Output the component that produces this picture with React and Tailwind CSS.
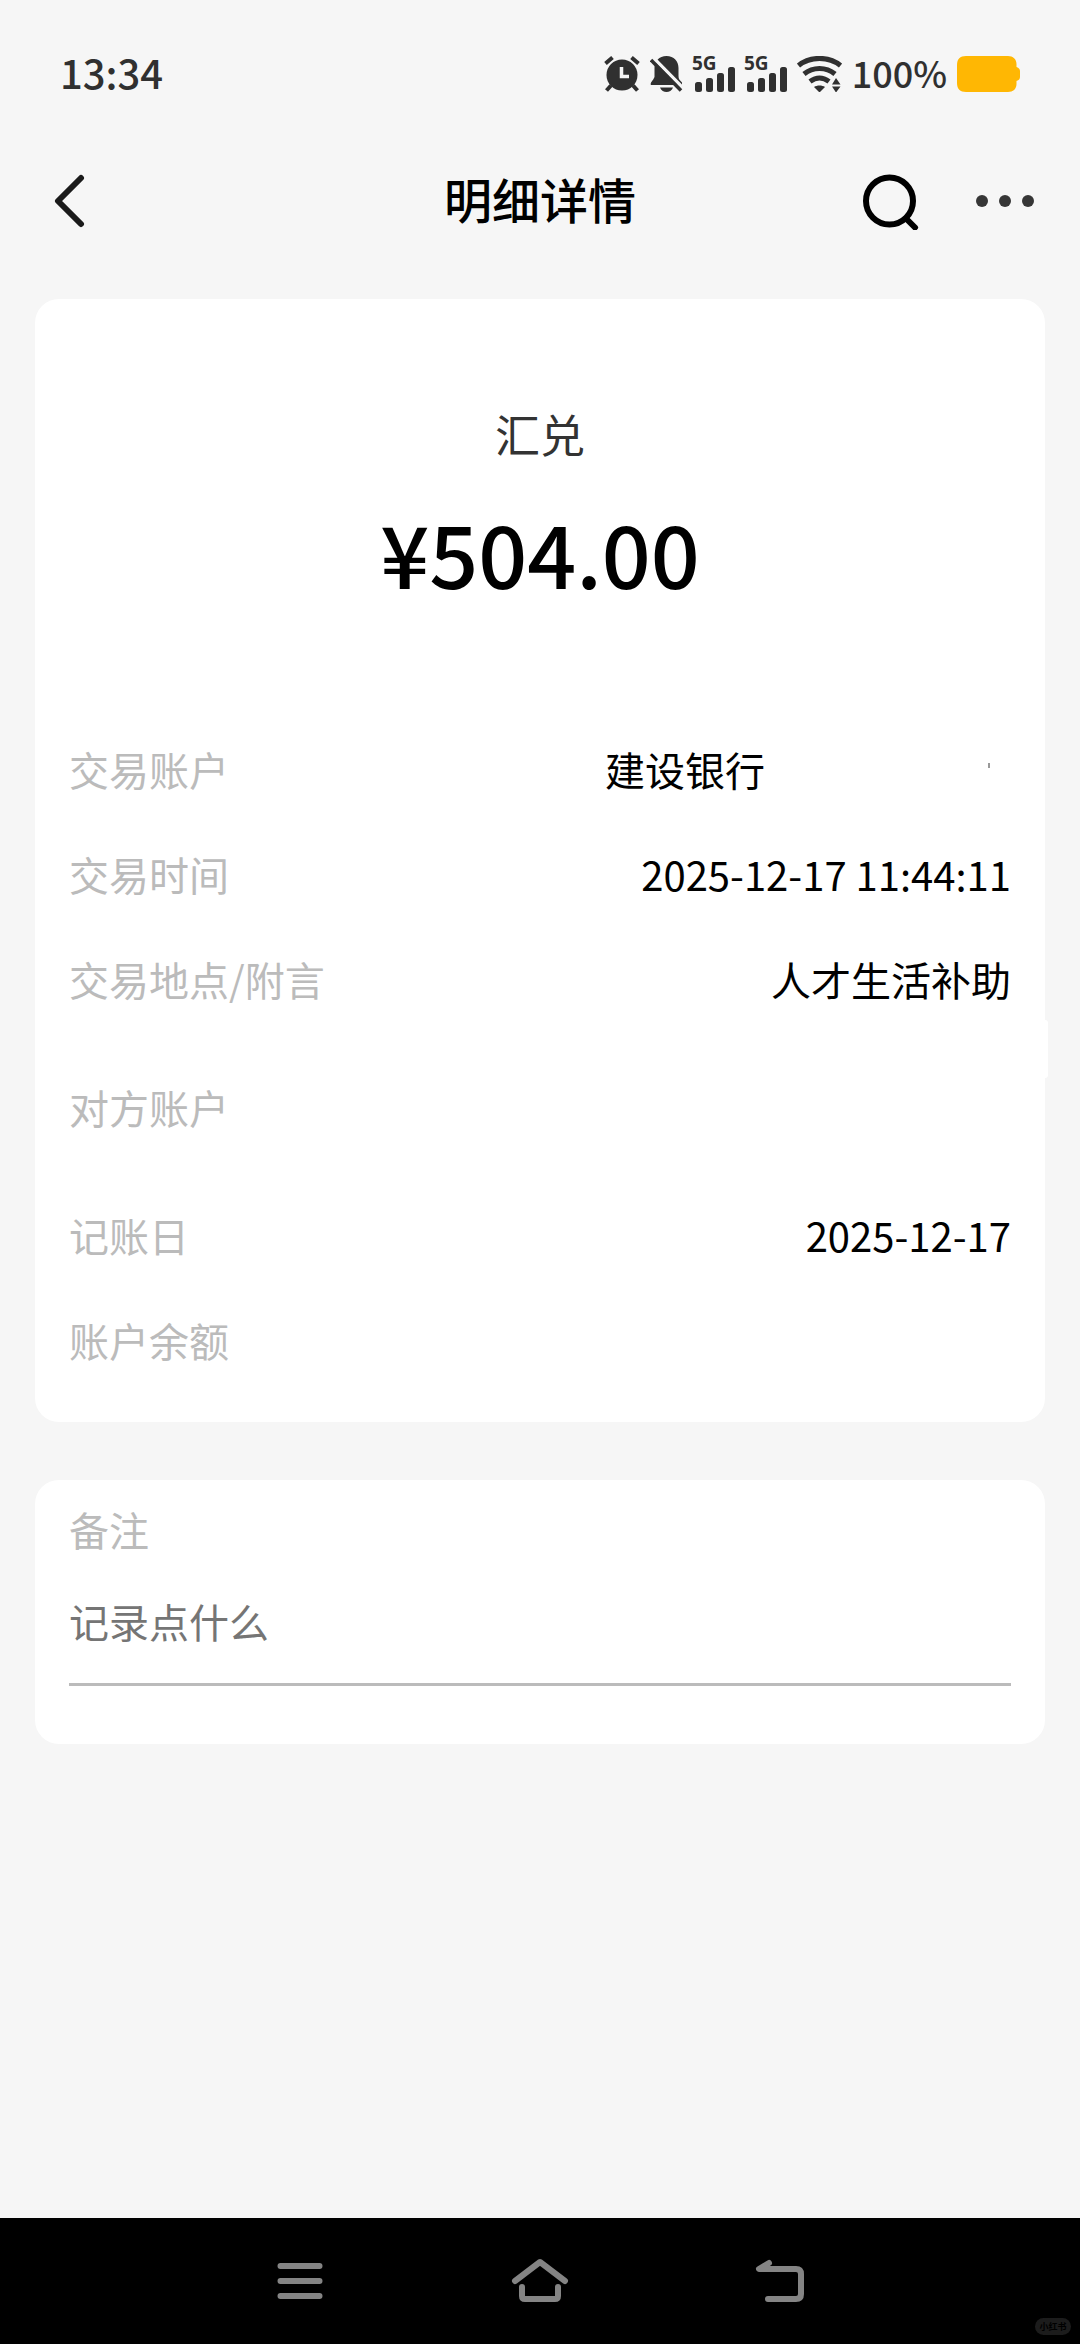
import React, { useState } from "react";

const details = [
  { label: "交易账户", value: "建设银行", masked: true },
  { label: "交易时间", value: "2025-12-17 11:44:11" },
  { label: "交易地点/附言", value: "人才生活补助" },
  { label: "对方账户", value: "", tall: true },
  { label: "记账日", value: "2025-12-17" },
  { label: "账户余额", value: "" }
];

const AlarmIcon = () => (
  <svg width="36" height="36" viewBox="0 0 36 36" fill="none" aria-hidden="true">
    <circle cx="18" cy="19" r="15.500" fill="#303030" />
    <path d="M1.500 7.500 8.500 1.500M34.500 7.500l-7-6" stroke="#303030" strokeWidth="4" />
    <path d="M7 29.500 2.500 34.500M29 29.500l4.500 5" stroke="#303030" strokeWidth="4" />
    <path d="M17.500 11v9.500H25" stroke="#f5f5f5" strokeWidth="3.500" />
  </svg>
);

const BellOffIcon = () => (
  <svg width="33" height="36" viewBox="0 0 33 36" fill="none" aria-hidden="true">
    <path d="M16.500 0C24 0 28.500 5 28.500 12v8c0 3 1 4 3.500 6.500V29H1c-1.500-2 2-4 3.500-8V12C4.500 5 9 0 16.500 0Z" fill="#303030" />
    <path d="M10 31.500h13c-1 3-4 4.500-6.500 4.500S11 34.500 10 31.500Z" fill="#303030" />
    <path d="M3 1.500 35 34" stroke="#f5f5f5" strokeWidth="3.500" />
    <path d="M1 4 31 34.500" stroke="#303030" strokeWidth="3.500" />
  </svg>
);

const SignalIcon = () => (
  <svg width="42" height="36" viewBox="0 0 42 36" className="overflow-visible" aria-hidden="true">
    <text x="-1" y="14" fontSize="19" fontWeight="700" fill="#303030" fontFamily="Open Sans, sans-serif">5G</text>
    <rect x="2" y="26" width="7" height="10" rx="2.500" fill="#303030" />
    <rect x="13" y="22" width="7" height="14" rx="2.500" fill="#303030" />
    <rect x="24" y="17" width="7" height="19" rx="2.500" fill="#303030" />
    <rect x="35" y="11" width="7" height="25" rx="2.500" fill="#303030" />
  </svg>
);

const WifiIcon = () => (
  <svg width="45" height="36" viewBox="0 0 45 36" fill="none" aria-hidden="true">
    <g stroke="#303030" strokeWidth="5">
      <path d="M1.500 9.500C13 0 32 0 43.500 9.500" />
      <path d="M7 18c9-7.500 22-7.500 31 0" />
      <path d="M13 25.500c6-4.500 13-4.500 19 0" />
    </g>
    <path d="M17 31c3-2 8-2 11 0l-5.500 5.500Z" fill="#303030" />
    <path d="M35 28.500 39 22l4.500 6.500ZM35 30.500l4 6 4.500-6Z" fill="#303030" />
  </svg>
);

const BatteryIcon = () => (
  <svg width="63" height="36" viewBox="0 0 63 36" aria-hidden="true">
    <path d="M9 0h42c5 0 8.500 3 8.500 8v3c2.500 1 3.500 2 3.500 4v6c0 2-1 3-3.500 4v3c0 5-3.500 8-8.500 8H9c-6 0-9-3-9-9V9c0-6 3-9 9-9Z" fill="#ffb703" />
  </svg>
);

const StatusBar = () => (
  <div className="flex h-[148px] items-center justify-between px-[60px] font-medium text-[#303030]">
    <span className="pb-[4px] text-[40px] leading-[48px]">13:34</span>
    <div className="flex items-center gap-[10px]">
      <AlarmIcon />
      <BellOffIcon />
      <SignalIcon />
      <SignalIcon />
      <WifiIcon />
      <span className="pb-[4px] text-[36px] leading-[48px]">100%</span>
      <BatteryIcon />
    </div>
  </div>
);

const Header = () => (
  <header className="grid h-[104px] grid-cols-[1fr_auto_1fr] items-center px-[45px]">
    <button type="button" aria-label="返回" className="justify-self-start">
      <svg width="45" height="56" viewBox="0 0 45 56" fill="none" stroke="#1a1a1a" strokeWidth="6" strokeLinecap="round" strokeLinejoin="round">
        <path d="M36 6 13 29l23 23" />
      </svg>
    </button>
    <h1 className="pb-[4px] text-[48px] leading-[60px] font-medium">明细详情</h1>
    <div className="flex items-center gap-[55px] justify-self-end">
      <button type="button" aria-label="搜索">
        <svg width="58" height="60" viewBox="0 0 58 60" fill="none" stroke="#000" strokeWidth="6">
          <circle cx="27.500" cy="31" r="23.500" />
          <path d="m44 48.500 9 9" strokeLinecap="round" />
        </svg>
      </button>
      <button type="button" aria-label="更多">
        <svg width="60" height="60" viewBox="0 0 60 60" fill="#363636">
          <circle cx="7" cy="31" r="6" />
          <circle cx="30" cy="31" r="6" />
          <circle cx="53" cy="31" r="6" />
        </svg>
      </button>
    </div>
  </header>
);

const DetailCard = () => (
  <section className="relative rounded-[24px] bg-white px-[34px] pt-[102px] pb-[53px]">
    <p className="text-center text-[45px] leading-[66px] text-[#333]">汇兑</p>
    <p className="mt-[21px] text-center text-[86px] leading-[128px] font-medium">¥504.00</p>
    <dl className="mt-[124px] flex flex-col gap-[47px] text-[40px] leading-[58px]">
      {details.map((row) => (
        <div key={row.label} className={row.tall ? "flex h-[104px] items-center justify-between" : "flex items-center justify-between"}>
          <dt className="text-[#bbb]">{row.label}</dt>
          <dd className="flex items-center">
            {row.value}
            {row.masked && (
              <svg width="246" height="40" viewBox="0 0 246 40" fill="none" aria-hidden="true">
                <path d="M224 14v5" stroke="#777" strokeWidth="1.500" />
              </svg>
            )}
          </dd>
        </div>
      ))}
    </dl>
    {/* edge of the blank area over the counterparty account */}
    <span className="absolute top-[721px] -right-[3px] h-[58px] w-[6px] rounded-r-[3px] bg-white" />
  </section>
);

const NoteCard = () => {
  const [note, setNote] = useState("");

  return (
    <section className="rounded-[24px] bg-white px-[34px] pt-[20px] pb-[58px] text-[40px] leading-[58px]">
      <label htmlFor="note" className="block text-[#bbb]">备注</label>
      <input
        id="note"
        type="text"
        value={note}
        onChange={(e) => setNote(e.target.value)}
        placeholder="记录点什么"
        className="block h-[128px] w-full border-b-[3px] border-[#bbb] bg-transparent outline-none placeholder:text-[#757575]"
      />
    </section>
  );
};

const NavBar = () => (
  <nav className="relative mt-auto grid h-[126px] grid-cols-3 items-center justify-items-center bg-black px-[180px]">
    <button type="button" aria-label="最近任务">
      <svg width="60" height="60" viewBox="0 0 60 60" stroke="#848484" strokeWidth="6" strokeLinecap="round">
        <path d="M10.500 15h39M10.500 30h39M10.500 45h39" />
      </svg>
    </button>
    <button type="button" aria-label="主屏幕">
      <svg width="60" height="60" viewBox="0 0 60 60" fill="none" stroke="#848484" strokeWidth="6" strokeLinecap="round" strokeLinejoin="round">
        <path d="M5 30 30 11l25 19" />
        <path d="M12 36v9q0 3 3 3h30q3 0 3-3v-9" />
      </svg>
    </button>
    <button type="button" aria-label="返回上一页">
      <svg width="60" height="60" viewBox="0 0 60 60" fill="none" stroke="#848484" strokeWidth="6" strokeLinecap="round" strokeLinejoin="round">
        <path d="M19 12 9 18h37q5 0 5 5v20q0 5-5 5H18" />
      </svg>
    </button>
    <span className="absolute right-[9px] bottom-[9px] flex h-[17px] w-[36px] items-center justify-center rounded-full bg-[#1c1c1c] text-[9px] leading-[12px] font-bold text-black">
      小红书
    </span>
  </nav>
);

const App = () => {
  return (
    <div className="flex min-h-screen flex-col bg-[#f6f6f6] font-['Noto_Sans_CJK_SC',sans-serif] text-black">
      <StatusBar />
      <Header />
      <main className="flex flex-col gap-[58px] px-[35px] pt-[47px] pb-[58px]">
        <DetailCard />
        <NoteCard />
      </main>
      <NavBar />
    </div>
  );
};

export default App;
